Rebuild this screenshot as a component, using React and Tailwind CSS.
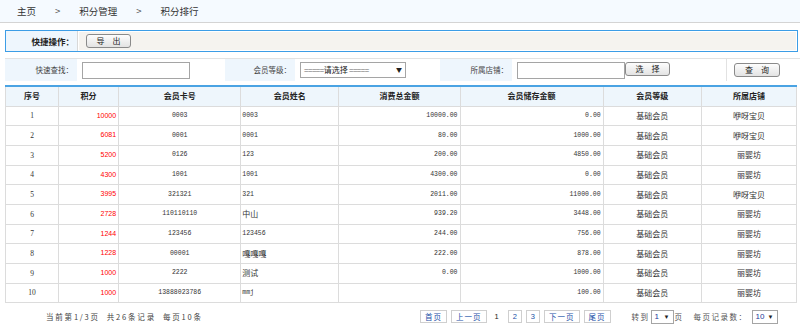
import React from 'react';

const rows = [
  ['1', '10000', '0003', '0003', '10000.00', '0.00', '基础会员', '咿呀宝贝'],
  ['2', '6081', '0001', '0001', '80.00', '1000.00', '基础会员', '咿呀宝贝'],
  ['3', '5200', '0126', '123', '200.00', '4850.00', '基础会员', '丽婴坊'],
  ['4', '4300', '1001', '1001', '4300.00', '0.00', '基础会员', '丽婴坊'],
  ['5', '3995', '321321', '321', '2011.00', '11000.00', '基础会员', '咿呀宝贝'],
  ['6', '2728', '110110110', '中山', '939.20', '3448.00', '基础会员', '丽婴坊'],
  ['7', '1244', '123456', '123456', '244.00', '756.00', '基础会员', '丽婴坊'],
  ['8', '1228', '00001', '嘎嘎嘎', '222.00', '878.00', '基础会员', '丽婴坊'],
  ['9', '1000', '2222', '测试', '0.00', '1000.00', '基础会员', '丽婴坊'],
  ['10', '1000', '13888023786', 'mmj', '', '100.00', '基础会员', '丽婴坊'],
];

const heads = ['序号', '积分', '会员卡号', '会员姓名', '消费总金额', '会员储存金额', '会员等级', '所属店铺'];
const widths = ['w-[53px]', 'w-[60px]', 'w-[122px]', 'w-[98px]', 'w-[121px]', 'w-[143px]', 'w-[98px]', 'w-[95px]'];

const cjk = "font-['Noto_Sans_CJK_SC',sans-serif]";
const mono = "font-['Liberation_Mono',monospace]";

function OldButton({ children, className = '' }) {
  return (
    <button
      className={`h-[14px] rounded-[3px] border border-[#8a8a8a] bg-gradient-to-b from-[#fdfdfd] to-[#e3e3e3] text-[8px] leading-none text-[#222] tracking-[8px] ${cjk} ${className}`}
    >
      {children}
    </button>
  );
}

function Select({ children, className = '' }) {
  return (
    <div className={`flex items-center justify-between border border-[#a5a5a5] bg-white px-[3px] ${className}`}>
      <span className="leading-none">{children}</span>
      <span className="text-[6px] leading-none text-[#222]">▼</span>
    </div>
  );
}

function PageBtn({ children, className = '' }) {
  return (
    <span className={`border border-[#cfcfcf] px-[4px] h-[13px] flex items-center ${className}`}>{children}</span>
  );
}

export default function App() {
  return (
    <div className={`w-[800px] h-[331px] bg-white text-[#333] overflow-hidden ${cjk}`}>
      {/* breadcrumb */}
      <div className="h-[23px] bg-[#f5faff] border-b border-[#d4d4d4] flex items-center pl-[17px] gap-[19px] text-[9.5px] text-[#333]">
        <span>主页</span>
        <span className="text-[#555]">&gt;</span>
        <span>积分管理</span>
        <span className="text-[#555]">&gt;</span>
        <span>积分排行</span>
      </div>

      {/* quick actions */}
      <div className="mt-[7px] ml-[5px] mr-[2px] h-[22px] border border-[#3c9de6] flex">
        <div className="w-[72px] bg-[#eef6fd] border-r border-[#d8d8d8] flex items-center justify-end pr-[3px] text-[8.5px] font-bold text-[#222]">
          快捷操作：
        </div>
        <div className="flex-1 bg-[#f5f3ef] border border-white flex items-center pl-[7px]">
          <OldButton className="w-[45px] pl-[8px]">导出</OldButton>
        </div>
      </div>

      {/* search row */}
      <div className="mt-[6px] ml-[5px] h-[23px] border-t border-[#e2e2e2] flex text-[7.5px] text-[#444]">
        <div className="w-[72px] bg-[#eef6fd] flex items-center justify-end pr-[4px]">快速查找：</div>
        <div className="w-[148px] flex items-center pl-[5px]">
          <div className="w-[108px] h-[17px] border border-[#a5a5a5] bg-white" />
        </div>
        <div className="w-[70px] bg-[#eef6fd] flex items-center justify-end pr-[4px]">会员等级：</div>
        <div className="w-[145px] flex items-center pl-[5px]">
          <Select className="w-[106px] h-[16px] text-[8px]">
            <span className="text-[#666] tracking-[-0.5px]">=====</span>
            <span className="text-[#222]">请选择</span>
            <span className="text-[#666] tracking-[-0.5px]"> =====</span>
          </Select>
        </div>
        <div className="w-[72px] bg-[#eef6fd] flex items-center justify-end pr-[4px]">所属店铺：</div>
        <div className="w-[215px] flex items-center pl-[5px] border-r border-[#e2e2e2]">
          <div className="w-[108px] h-[17px] border border-[#a5a5a5] bg-white" />
          <OldButton className="w-[45px] pl-[8px] self-start mt-[3px]">选择</OldButton>
        </div>
        <div className="flex-1 flex items-center pl-[7px]">
          <OldButton className="w-[46px] pl-[8px]">查询</OldButton>
        </div>
      </div>

      {/* table */}
      <table className="mt-[4px] ml-[5px] w-[792px] border-collapse table-fixed">
        <thead>
          <tr className="h-[20px] bg-[#eef6fc] border-t-2 border-[#4aa3e3]">
            {heads.map((h, i) => (
              <th
                key={h}
                className={`${widths[i]} border-x border-[#dcdcdc] text-[8px] font-bold text-[#222] text-center p-0`}
              >
                {h}
              </th>
            ))}
          </tr>
        </thead>
        <tbody>
          {rows.map((r) => (
            <tr key={r[0]} className="h-[19.7px]">
              <td className="border border-[#dcdcdc] text-center text-[7.5px] font-['Liberation_Serif',serif] p-0">{r[0]}</td>
              <td className="border border-[#dcdcdc] text-right pr-[2px] text-[7px] text-[#ff0000] font-['Liberation_Sans',sans-serif] p-0">{r[1]}</td>
              <td className={`border border-[#dcdcdc] text-center text-[6.5px] ${mono} p-0`}>{r[2]}</td>
              <td className={`border border-[#dcdcdc] text-left pl-[1px] p-0 ${/^[0-9a-z]+$/.test(r[3]) ? mono + ' text-[6.5px]' : cjk + ' text-[8px]'}`}>{r[3]}</td>
              <td className={`border border-[#dcdcdc] text-right pr-[2px] text-[6.5px] ${mono} p-0`}>{r[4]}</td>
              <td className={`border border-[#dcdcdc] text-right pr-[2px] text-[6.5px] ${mono} p-0`}>{r[5]}</td>
              <td className="border border-[#dcdcdc] text-center text-[8px] p-0">{r[6]}</td>
              <td className="border border-[#dcdcdc] text-center text-[8px] p-0">{r[7]}</td>
            </tr>
          ))}
        </tbody>
      </table>

      {/* footer / paging */}
      <div className="h-[27px] flex items-center text-[7.5px]">
        <div className="w-[420px] pl-[46px] tracking-[1.8px] text-[#444]">
          当前第1/3页&nbsp;&nbsp;共26条记录&nbsp;&nbsp;每页10条
        </div>
        <div className="flex items-center gap-[4px] text-[#1a4fa8] tracking-[1px]">
          <PageBtn>首页</PageBtn>
          <PageBtn>上一页</PageBtn>
          <span className="text-[#222] px-[4px] font-['Liberation_Sans',sans-serif]">1</span>
          <PageBtn className="font-['Liberation_Sans',sans-serif] tracking-normal">2</PageBtn>
          <PageBtn className="font-['Liberation_Sans',sans-serif] tracking-normal">3</PageBtn>
          <PageBtn>下一页</PageBtn>
          <PageBtn>尾页</PageBtn>
        </div>
        <div className="ml-[21px] flex items-center text-[#555] tracking-[1.5px]">
          <span>转到</span>
          <Select className="w-[23px] h-[14px] ml-[1px] text-[8px] tracking-normal font-['Liberation_Sans',sans-serif] text-[#1a3a9a]">1</Select>
          <span className="ml-[1px]">页</span>
          <span className="ml-[10px]">每页记录数：</span>
          <Select className="w-[26px] h-[14px] ml-[4px] text-[8px] tracking-normal font-['Liberation_Sans',sans-serif] text-[#1a3a9a]">10</Select>
        </div>
      </div>
    </div>
  );
}
